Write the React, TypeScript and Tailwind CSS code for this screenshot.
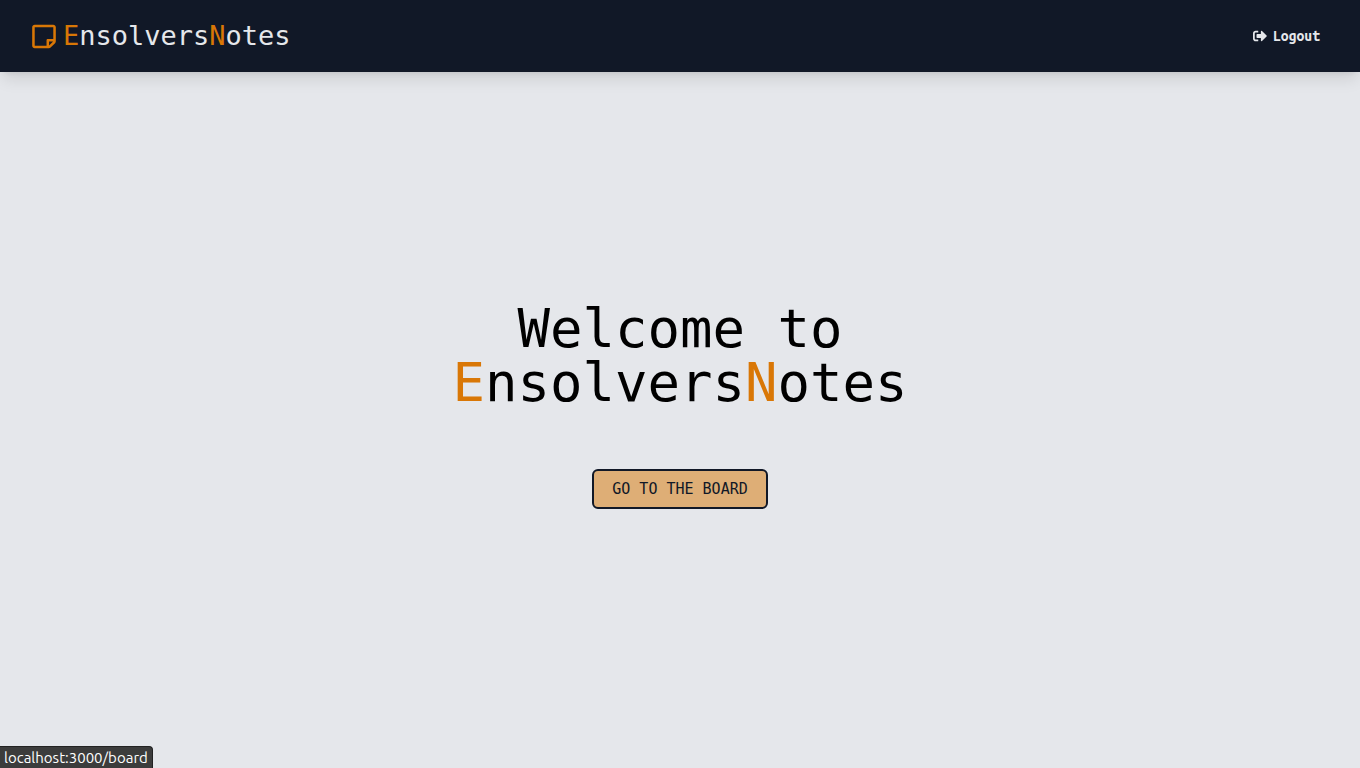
import { FaRegStickyNote, FaSignOutAlt } from "react-icons/fa";

function BrandName() {
  return (
    <>
      <span className="text-[#d97706]">E</span>nsolvers<span className="text-[#d97706]">N</span>otes
    </>
  );
}

export default function App() {
  return (
    <div className="flex min-h-screen flex-col bg-[#e5e7eb] font-['DejaVu_Sans_Mono',monospace] text-black">
      <header className="flex h-[72px] items-center justify-between bg-[#111827] pr-10 pl-8 text-gray-200 shadow-lg">
        <a href="/" className="flex items-center gap-[7px] text-[27px] leading-[38px]">
          <FaRegStickyNote className="h-[27px] w-6 text-[#d97706]" aria-hidden="true" />
          <span><BrandName /></span>
        </a>
        <button type="button" className="flex items-center gap-1.5 text-[14px] font-bold font-['Ubuntu_Mono','Noto_Sans_Mono','DejaVu_Sans_Mono',monospace]">
          <FaSignOutAlt className="size-[14px]" aria-hidden="true" />
          Logout
        </button>
      </header>
      <main className="flex grow flex-col items-center justify-center gap-[59px] pb-[30px]">
        <h1 className="text-center text-[54px] leading-[54px]">
          Welcome to<br />
          <BrandName />
        </h1>
        <a href="/board" className="rounded-md border-2 border-[#111827] bg-[#deae76] px-[18px] py-2 text-[15px] leading-5 text-[#111827]">
          GO TO THE BOARD
        </a>
      </main>
      <div className="fixed bottom-0 left-0 rounded-tr border-t border-r border-[#222] bg-[#3c3c3c] px-1 text-[15px] leading-[21px] text-white font-['Ubuntu','Noto_Sans',sans-serif]">
        localhost:3000/board
      </div>
    </div>
  );
}
